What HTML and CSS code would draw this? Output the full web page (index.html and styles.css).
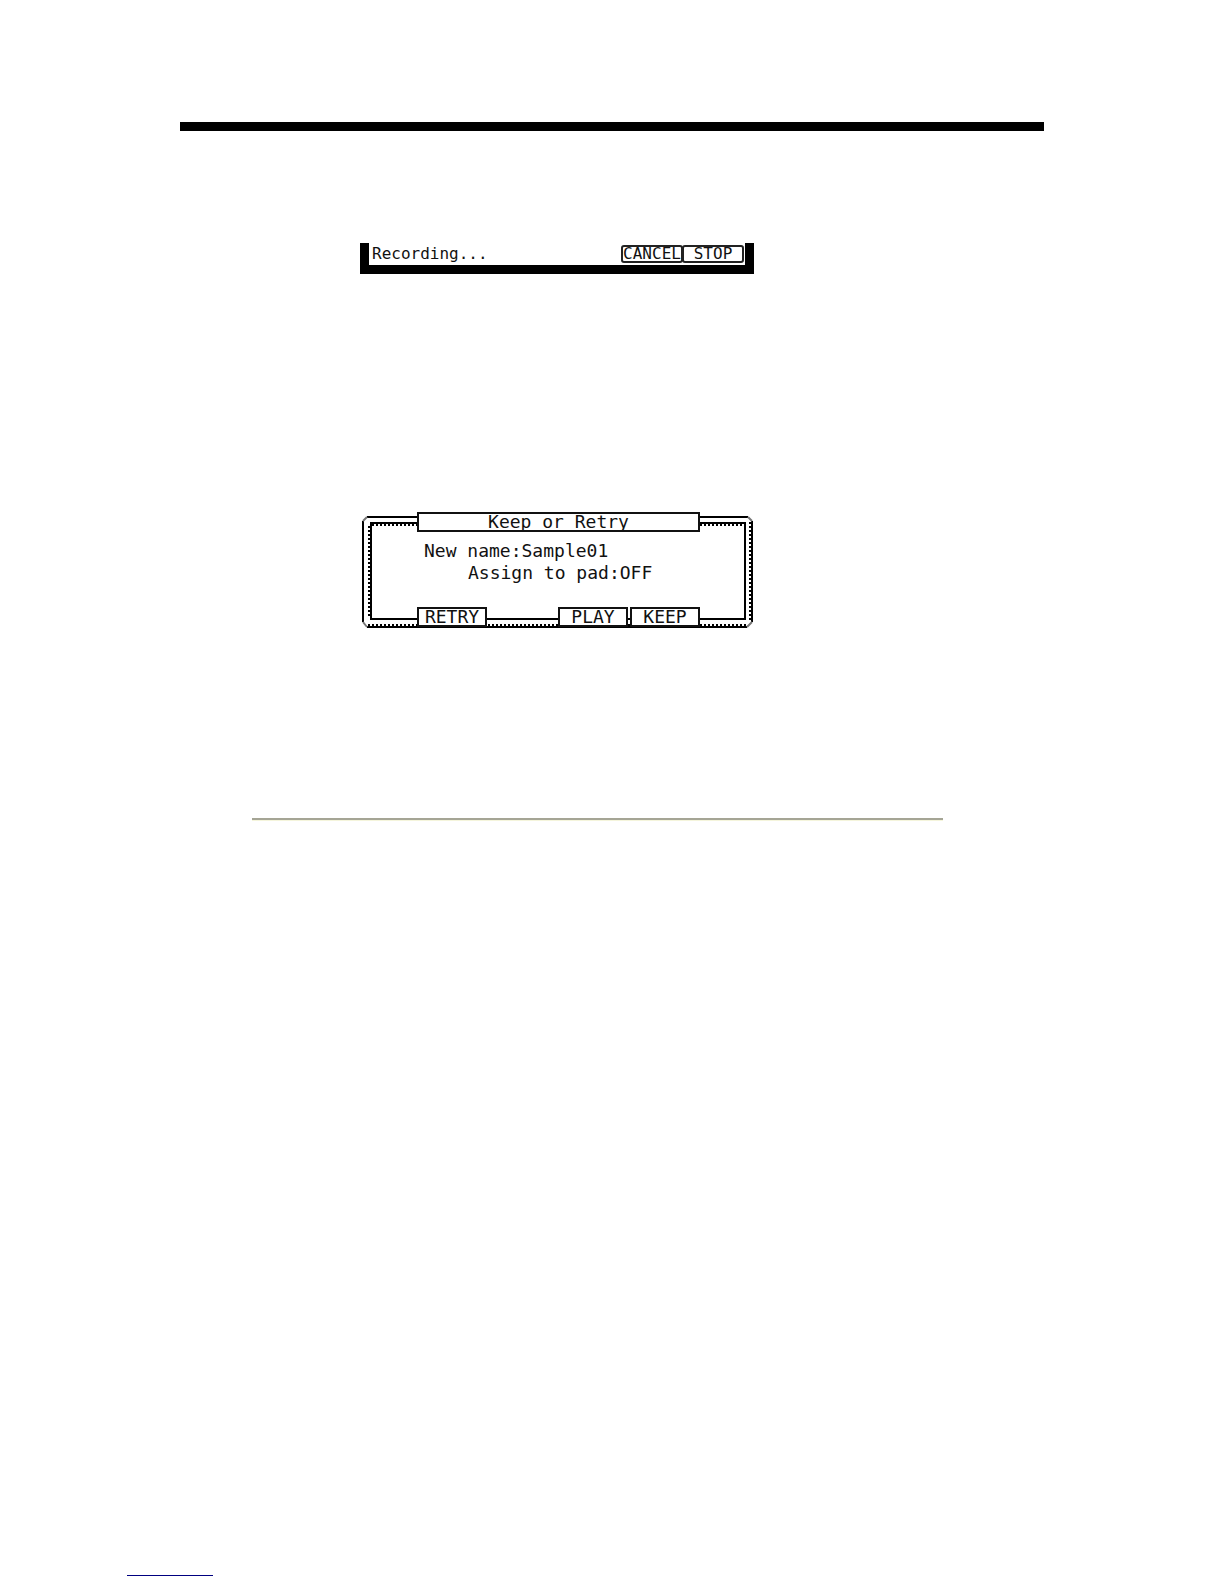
FILE: index.html
```html
<!DOCTYPE html>
<html lang="en">
<head>
	<meta charset="UTF-8">
	<meta name="viewport" content="width=device-width, initial-scale=1">
	<title>Recording a sample</title>
	<link rel="stylesheet" href="styles.css">
</head>
<body>
	<main class="page">
		<hr class="page__rule">

		<section class="lcd">
			<span class="lcd__status">Recording...</span>
			<button class="lcd__key" type="button">CANCEL</button>
			<button class="lcd__key" type="button">STOP</button>
		</section>

		<section class="dialog">
			<svg class="dialog__frame" width="391" height="116" viewBox="0 0 391 116" fill="none" stroke="#000" stroke-width="2" aria-hidden="true">
				<!-- outer edge -->
				<path d="M5 5H386M1 9V110M5 115H385M390 9V110"/>
				<path stroke="#777" d="M1 9L5 5M386 5L390 9M1 110L5 115M385 115L390 110"/>
				<!-- inner edge -->
				<path d="M9 107V11H383V107Z"/>
				<!-- teeth -->
				<path stroke-dasharray="2 2" d="M10 13H382M7 14V106M388 10V110M6 113H384"/>
			</svg>
			<h1 class="dialog__title">Keep or Retry</h1>
			<div class="dialog__fields">
				<div class="dialog__row">New name:Sample01</div>
				<div class="dialog__row dialog__row--indent">Assign to pad:OFF</div>
			</div>
			<div class="dialog__keys">
				<button class="dialog__key" type="button">RETRY</button>
				<button class="dialog__key dialog__key--right" type="button">PLAY</button>
				<button class="dialog__key" type="button">KEEP</button>
			</div>
		</section>

		<hr class="page__divider">
	</main>
	<footer class="footer">
		<hr class="footer__line">
	</footer>
</body>
</html>
```

FILE: styles.css
```css
* { box-sizing: border-box; }

body {
	display: flex;
	flex-direction: column;
	min-height: 100vh;
	margin: 0;
	background: #FFF;
	color: #111;
	font-family: "DejaVu Sans Mono", monospace;
	font-size: 18px;
}

hr {
	margin: 0;
	border: none;
}

button {
	padding: 0;
	background: #FFF;
	color: inherit;
	font: inherit;
}

.page {
	flex: 1;
	padding: 122px 180px 0;
}
.page__rule {
	height: 9px;
	background: #000;
}
.page__divider {
	height: 3px;
	margin: 191px 101px 0 72px;
	background: #A5A595;
	border-bottom: 1px solid #F5F5DC;
}

.lcd {
	display: flex;
	align-items: center;
	width: 394px;
	margin: 112px 0 0 180px;
	padding: 2px 1px 2px 3px;
	border: 9px solid #000;
	border-top: none;
	font-size: 16px;
	line-height: 18px;
}
.lcd__status {
	flex: 1;
}
.lcd__key {
	width: 62px;
	height: 18px;
	border: 2px solid #222;
	border-radius: 3px;
	line-height: 14px;
}
.lcd__key + .lcd__key {
	margin-left: -1px;
}

.dialog {
	position: relative;
	width: 390px;
	margin: 238px 0 0 182px;
	padding: 0 52px 0 55px;
}
.dialog__frame {
	position: absolute;
	top: 0;
	left: 0;
}
.dialog__title {
	position: relative;
	margin: 0;
	border: 2px solid #111;
	background: #FFF;
	font-size: 18px;
	font-weight: normal;
	line-height: 16px;
	text-align: center;
}
.dialog__fields {
	padding: 8px 0 23px 7px;
	line-height: 22px;
}
.dialog__row {
	position: relative;
	white-space: nowrap;
}
.dialog__row--indent {
	padding-left: 44px;
}
.dialog__keys {
	position: relative;
	display: flex;
	gap: 2px;
}
.dialog__key {
	width: 70px;
	height: 20px;
	border: 2px solid #111;
	line-height: 16px;
}
.dialog__key--right {
	margin-left: auto;
}

.footer {
	padding: 0 127px 8px;
}
.footer__line {
	width: 86px;
	height: 1px;
	background: #000080;
}
```
